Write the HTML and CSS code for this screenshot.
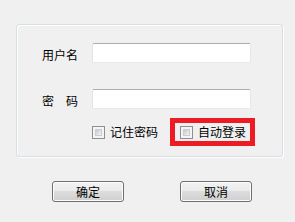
FILE: index.html
```html
<!DOCTYPE html>
<html lang="zh-CN">
<head>
    <meta charset="UTF-8">
    <title>登录</title>
    <link rel="stylesheet" href="styles.css">
</head>
<body>
    <div class="group">
        <div class="row">
            <label class="label" for="user">用户名</label>
            <input class="input" type="text" id="user">
        </div>
        <div class="row">
            <label class="label" for="pass">密&#12288;码</label>
            <input class="input" type="password" id="pass">
        </div>
        <div class="options">
            <label class="check-item">
                <span class="check"><span class="check-inner"></span></span>
                <span>记住密码</span>
            </label>
            <label class="check-item marked">
                <span class="check"><span class="check-inner"></span></span>
                <span>自动登录</span>
            </label>
        </div>
    </div>
    <div class="buttons">
        <button class="btn">确定</button>
        <button class="btn">取消</button>
    </div>
</body>
</html>
```

FILE: styles.css
```css
body {
    margin: 0;
    background-color: #f0f0f0;
    font-family: "Noto Sans CJK SC", "Noto Sans", sans-serif;
    font-size: 12px;
    color: #000;
}
.group {
    margin: 24px 0 0 16px;
    width: 267px;
    height: 133px;
    box-sizing: border-box;
    padding: 18px 0 0 25px;
    border: 1px solid #d5dfe5;
    border-radius: 3px;
    box-shadow: inset 1px 1px 0 #fff, 1px 1px 0 #fff;
}
.row {
    display: flex;
    align-items: center;
    height: 20px;
}
.row + .row {
    margin-top: 26px;
}
.label {
    width: 50px;
    padding-top: 3px;
    line-height: 12px;
}
.input {
    width: 159px;
    height: 20px;
    box-sizing: border-box;
    margin: 0;
    padding: 0 3px;
    background: #fff;
    border: 1px solid #e3e9ef;
    border-top-color: #abadb3;
    border-left-color: #e2e3ea;
    border-radius: 2px;
    outline: none;
}
.options {
    display: flex;
    align-items: center;
    height: 28px;
    margin-top: 9px;
    padding-left: 50px;
}
.check-item {
    display: flex;
    align-items: center;
    gap: 5px;
    line-height: 12px;
}
.check-item.marked {
    margin-left: 12px;
    height: 18px;
    padding: 0 4px 0 5px;
    border: 5px solid #ed1c24;
}
.check {
    width: 13px;
    height: 13px;
    box-sizing: border-box;
    padding: 2px;
    border: 1px solid #8f8f8f;
    background: #f4f4f4;
}
.check-inner {
    display: block;
    width: 100%;
    height: 100%;
    box-sizing: border-box;
    border: 1px solid #c9ccd0;
    background: linear-gradient(135deg, #c3c6ca, #f7f7f7);
}
.buttons {
    display: flex;
    gap: 56px;
    margin-top: 24px;
    padding-left: 52px;
}
.btn {
    width: 72px;
    height: 21px;
    padding: 0;
    font-family: inherit;
    font-size: 12px;
    line-height: 12px;
    color: #000;
    border: 1px solid #707070;
    border-radius: 3px;
    background: linear-gradient(#f2f2f2 0%, #ebebeb 50%, #dddddd 50%, #cfcfcf 100%);
    box-shadow: inset 0 0 0 1px #fcfcfc;
}
```
